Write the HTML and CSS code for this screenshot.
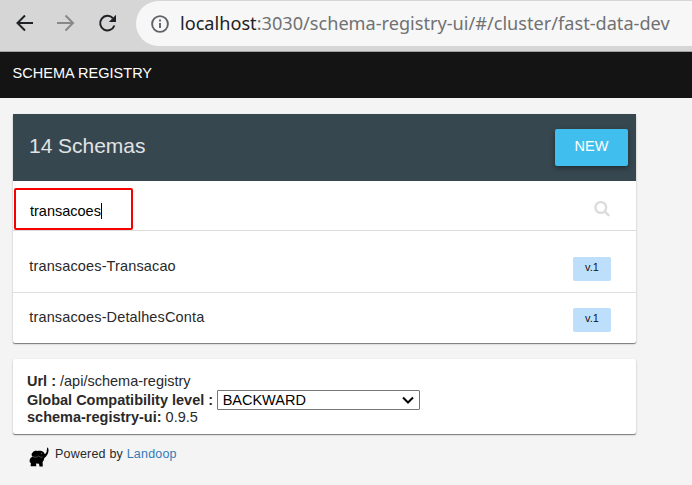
FILE: index.html
```html
<!DOCTYPE html>
<html lang="en">
<head>
<meta charset="utf-8">
<title>Schema Registry</title>
<link rel="stylesheet" href="styles.css">
</head>
<body>
<header class="browser">
  <svg class="nav" viewBox="0 0 24 24"><path d="M20 12H4.500M12 4.500L4.500 12l7.500 7.500"/></svg>
  <svg class="nav forward" viewBox="0 0 24 24"><path d="M3 12H18.500M11.500 4.500l7.500 7.500-7.500 7.500"/></svg>
  <svg class="nav reload" viewBox="0 0 24 24"><path d="M18.400 14.500a7.300 7.300 0 1 1-1.500-7.300"/><path class="solid" d="M20 3.800v7.200h-7.200z"/></svg>
  <div class="address">
    <svg class="info" viewBox="0 0 20 20"><circle cx="10" cy="10" r="7.900"/><path d="M10 9v5M10 5.500v2"/></svg>
    <span class="url"><b>localhost</b>:3030/schema-registry-ui/#/cluster/fast-data-dev</span>
  </div>
</header>
<nav class="topbar"><span>SCHEMA REGISTRY</span></nav>
<main>
  <section class="card">
    <div class="toolbar"><h1>14 Schemas</h1><button class="new">NEW</button></div>
    <div class="search">
      <div class="field"><span>transacoes</span><i class="caret"></i></div>
      <svg class="glass" viewBox="0 0 16 16"><circle cx="6.800" cy="6.500" r="5.400"/><path d="M11 10.700l3.500 3.500"/></svg>
    </div>
    <ul>
      <li><span>transacoes-Transacao</span><em>v.1</em></li>
      <li><span>transacoes-DetalhesConta</span><em>v.1</em></li>
    </ul>
  </section>
  <section class="card details">
    <div><b>Url :</b> /api/schema-registry</div>
    <div class="compat"><b>Global Compatibility level :</b>
      <div class="select"><span>BACKWARD</span><svg viewBox="0 0 12 8"><path d="M1 1.500l5 5 5-5"/></svg></div>
    </div>
    <div><b>schema-registry-ui:</b> 0.9.5</div>
  </section>
  <footer>
    <svg class="elephant" viewBox="0 0 20 20"><path d="M18.300 0.300c1 .8 1.400 2 1.200 3.700-.3 3-2 5.600-4.200 7-.2 1.900-1 3.200-1.700 4l.2 4.500h-3.300l-.5-2.800-3-.3.300 2.800H1.600l.3-3.200C.3 15.500.4 12.500 1.400 11.200c.6-.8 1.400-1.200 2.300-1.500C2 8.200 2.300 6.400 3.900 5.200c.8-1.100 2.700-1.500 4.500-1.300 2.300-.4 4.800-.2 6.100 1.100.7.700.9 1.500 1.200 2.100 1.500-.5 2.200-2 2.100-4z"/><path class="ear" d="M4 9.700c2 .8 4.500.6 5.800-.8 1 1.600 2.600 1.600 3.700.8"/><circle class="eye" cx="12.500" cy="6.800" r=".45"/></svg>
    <span>Powered by <a>Landoop</a></span>
  </footer>
</main>
</body>
</html>
```
FILE: styles.css
```css
* { box-sizing: border-box; }
body { margin: 0; height: 485px; overflow: hidden; background: #f4f4f4; color: #292929; font: 14.5px "Liberation Sans", sans-serif; white-space: nowrap; }
svg { fill: none; stroke: currentColor; flex: none; }
.browser { height: 52px; padding: 1px 0 0 13px; display: flex; background: #d6d6d6; border-bottom: 1px solid #a2a2a2; }
.nav { width: 24px; height: 24px; margin: 10px 17px 0 0; stroke-width: 2; color: #202124; }
.forward { color: #888; }
.reload { margin-right: 16px; margin-left: 1px; }
.reload .solid { fill: currentColor; stroke: none; }
.address { flex: 1; min-width: 0; height: 45px; border-radius: 23px 0 0 23px; background: #f7f7f7; padding-left: 14px; display: flex; align-items: center; }
.info { width: 20px; height: 20px; color: #5f6368; stroke-width: 1.9; }
.url { margin: -2px 0 0 10px; font: 18.15px "Noto Sans", sans-serif; color: #707173; }
.url b { font-weight: 400; color: #202124; }
.topbar { height: 46px; padding: 13px 12.5px; line-height: 16px; background: #141414; color: #fff; letter-spacing: .03px; }
main { padding: 16px 0 0 13px; }
.card { width: 623px; background: #fff; border-radius: 2px; box-shadow: 0 1px 2px rgba(0,0,0,.3), 0 1px 0 #aaa; }
.toolbar { height: 67px; padding: 15px 8px 0 16px; display: flex; justify-content: space-between; background: #37474f; color: #e1e3e4; }
h1 { margin: 5px 0 0; font-size: 21px; line-height: 24px; font-weight: 400; letter-spacing: -.03px; }
.new { width: 73px; height: 37px; padding: 0 0 4px; border: 0; border-radius: 2px; background: #40beee; color: #fff; font: 14.5px "Liberation Sans", sans-serif; box-shadow: 0 2px 5px rgba(0,0,0,.4); }
.search { height: 50px; display: flex; justify-content: space-between; border-bottom: 1px solid #dcdcdc; }
.field { position: relative; z-index: 1; width: 119px; height: 42px; margin: 7px 0 0 1px; padding: 3px 0 0 14px; border: 2px solid #f60000; border-radius: 2px; display: flex; align-items: center; color: #000; }
.caret { width: 1px; height: 16px; background: #000; }
.glass { width: 16px; height: 16px; margin: 20px 26px 0 0; color: #dcdcdc; stroke-width: 2.4; stroke-linecap: round; }
ul { list-style: none; margin: 0; padding: 11px 0 0; }
li { height: 51px; padding: 0 25px 0 16.3px; display: flex; justify-content: space-between; border-bottom: 1px solid #e0e0e0; }
li:last-child { border: 0; height: 50px; }
li span { margin-top: 16px; line-height: 17px; letter-spacing: .14px; }
em { width: 38px; height: 24px; margin-top: 15px; border-radius: 2px; background: #bedffb; color: #111; font: 11px/21px "Liberation Sans", sans-serif; text-align: center; }
.details { margin-top: 16px; height: 75px; padding: 13px 14px; line-height: 18px; }
.compat { display: flex; height: 18px; line-height: 20px; }
.select { margin-left: 4px; width: 203px; height: 20px; border: 1px solid #767676; border-radius: 1px; padding: 0 5px 0 4.5px; line-height: 18px; color: #000; display: flex; align-items: center; justify-content: space-between; }
.select svg { width: 12px; height: 8px; stroke-width: 2; }
footer { display: flex; padding: 12px 0 0 16px; font-size: 12.5px; line-height: 16px; letter-spacing: .2px; }
.elephant { width: 20px; height: 20px; margin: 1px 6px 0 0; color: #000; }
.elephant path { fill: #000; stroke: none; }
.elephant .ear { fill: none; stroke: #999; stroke-width: .5; }
.elephant .eye { fill: #ddd; stroke: none; }
a { color: #337ab7; }
```
